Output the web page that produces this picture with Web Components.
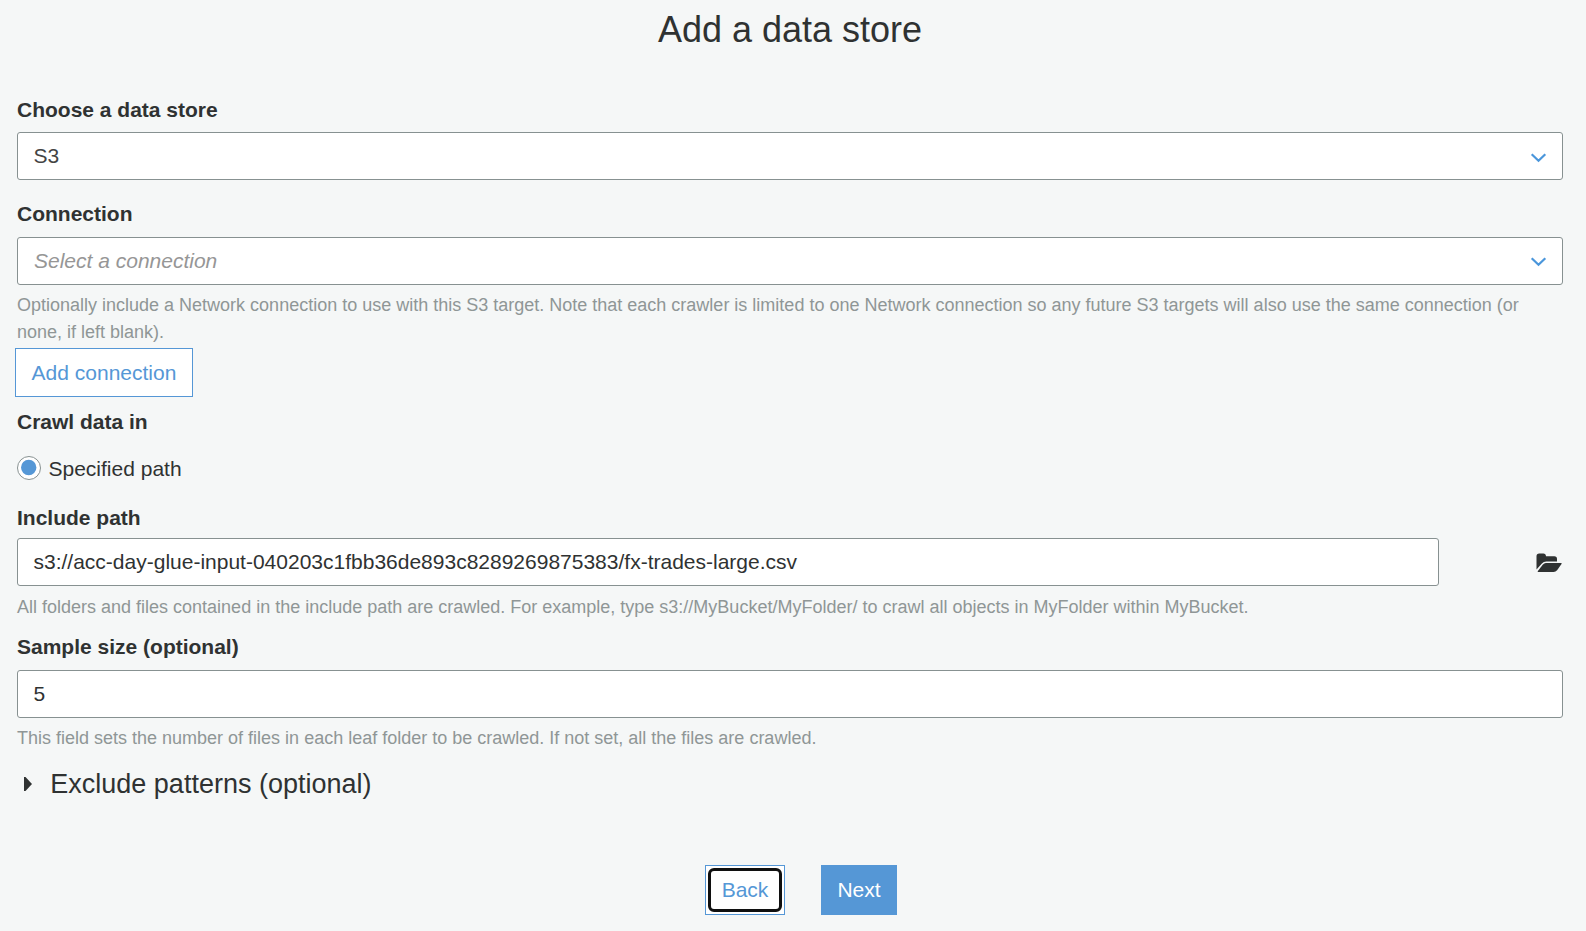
<!DOCTYPE html>
<html lang="en">
<head>
<meta charset="utf-8">
<title>Add a data store</title>
<style>
html,body{margin:0;height:100%;overflow:hidden;background:#f5f7f7}
body{font-family:"Liberation Sans",Arial,sans-serif;color:#2f3232;font-size:21px}
</style>
</head>
<body>
<data-store-page></data-store-page>
<script>
const define=(name,html)=>{
  const t=document.createElement('template');
  t.innerHTML=html;
  customElements.define(name,class extends HTMLElement{
    constructor(){super();this.attachShadow({mode:'open'}).append(t.content.cloneNode(true));}
  });
};
define('page-title',`<style>:host{display:block}h1{margin:0;font-size:36px;line-height:40px;font-weight:400;text-align:center;white-space:nowrap}</style><h1><slot></slot></h1>`);
define('field-label',`<style>:host{display:block;font-weight:700;line-height:30px;white-space:nowrap}</style><slot></slot>`);
define('help-text',`<style>:host{display:block;font-size:18px;line-height:27px;color:#8f9696}</style><slot></slot>`);
define('text-field',`<style>:host{display:flex;align-items:center;box-sizing:border-box;height:48px;padding:0 15.5px;border:1px solid #879191;border-radius:3px;background:#fff;white-space:nowrap}</style><slot></slot>`);
define('select-field',`<style>:host{display:flex;align-items:center;justify-content:space-between;box-sizing:border-box;height:48px;padding:0 15px 0 15.5px;border:1px solid #879191;border-radius:3px;background:#fff;color:#444}
:host([placeholder]){color:#969696;font-style:italic;padding-left:16px}svg{display:block;margin-top:3px}:host([placeholder]) svg{margin-top:1px}</style>
<span><slot></slot></span><svg width="17" height="11" viewBox="0 0 17 11"><path d="M1.7 2.2 8.5 8.8l6.8-6.6" fill="none" stroke="#4a96db" stroke-width="2.2"/></svg>`);
define('action-button',`<style>:host{display:block;box-sizing:border-box;width:var(--w);height:var(--h,50px);border:1px solid #5597d6;background:#fff;color:#5597d6;white-space:nowrap}
div{box-sizing:border-box;height:100%;display:flex;align-items:center;justify-content:center}
:host([primary]){background:#5597d6;color:#fff}
:host([focused]){display:flow-root}
:host([focused]) div{border:3px solid #101010;border-radius:6px;margin:2px;height:calc(100% - 4px)}</style><div><span><slot></slot></span></div>`);
define('radio-option',`<style>:host{display:flex;align-items:center;gap:7.5px;height:24px;line-height:24px}svg{display:block}span{margin-top:2px}</style>
<svg width="24" height="24"><circle cx="12" cy="12" r="11.5" fill="#fff" stroke="#879191"/><circle cx="11.7" cy="11.5" r="7.7" fill="#5597d6"/></svg><span><slot></slot></span>`);
define('folder-icon',`<style>:host{display:block;margin-top:2px}svg{display:block}</style>
<svg width="26" height="20" viewBox="0 0 26 20" fill="#2f3232"><path d="M.5 16.5V3.2Q.5.5 3.2.5h4.2Q9.8.5 10 3.2h8.3Q21 3.2 21 6v2.4H10.3Q7.6 8.4 5.9 10.4Z"/><path d="M9.9 10H25.3Q26 10.3 25.5 11.1L21.1 17.2Q19.7 19 17.6 19H2Q1.3 18.8 1.9 17.9L6.7 11.8Q8.2 10 9.9 10Z"/></svg>`);
define('expand-section',`<style>:host{display:flex;align-items:center;height:36px;font-size:27px;line-height:36px;gap:18.3px;padding-left:7px}svg{display:block}</style>
<svg width="8" height="14" viewBox="0 0 8 14"><path d="M0 0H1.5L8 7 1.5 14H0Z" fill="#2f3232"/></svg><span><slot></slot></span>`);
define('data-store-page',`<style>
:host{display:flex;flex-direction:column;box-sizing:border-box;width:1580px;padding:10px 17px 0}
page-title{margin-bottom:45px}
.stack{display:flex;flex-direction:column}
.path{display:flex;align-items:center;justify-content:space-between;margin-right:1px}
.path text-field{width:1422px}
.add{--w:178px;--h:49px;margin:2px 0 10px -2px}
.actions{display:flex;gap:36px;margin:63px 0 0 688px}
</style>
<page-title>Add a data store</page-title>
<div class="stack">
<field-label>Choose a data store</field-label>
<select-field style="margin:7px 0 19px">S3</select-field>
<field-label>Connection</field-label>
<select-field placeholder style="margin:8px 0 7px">Select a connection</select-field>
<help-text>Optionally include a Network connection to use with this S3 target. Note that each crawler is limited to one Network connection so any future S3 targets will also use the same connection (or none, if left blank).</help-text>
<action-button class="add">Add connection</action-button>
<field-label>Crawl data in</field-label>
<radio-option style="margin:19px 0 23px">Specified path</radio-option>
<field-label>Include path</field-label>
<div class="path" style="margin-top:5px;margin-bottom:8px"><text-field>s3://acc-day-glue-input-040203c1fbb36de893c8289269875383/fx-trades-large.csv</text-field><folder-icon></folder-icon></div>
<help-text>All folders and files contained in the include path are crawled. For example, type s3://MyBucket/MyFolder/ to crawl all objects in MyFolder within MyBucket.</help-text>
<field-label style="margin-top:11px">Sample size (optional)</field-label>
<text-field style="margin:8px 0 7px">5</text-field>
<help-text>This field sets the number of files in each leaf folder to be crawled. If not set, all the files are crawled.</help-text>
<expand-section style="margin-top:14px">Exclude patterns (optional)</expand-section>
</div>
<div class="actions"><action-button focused style="--w:80px">Back</action-button><action-button primary style="--w:76px">Next</action-button></div>`);
</script>
</body>
</html>
